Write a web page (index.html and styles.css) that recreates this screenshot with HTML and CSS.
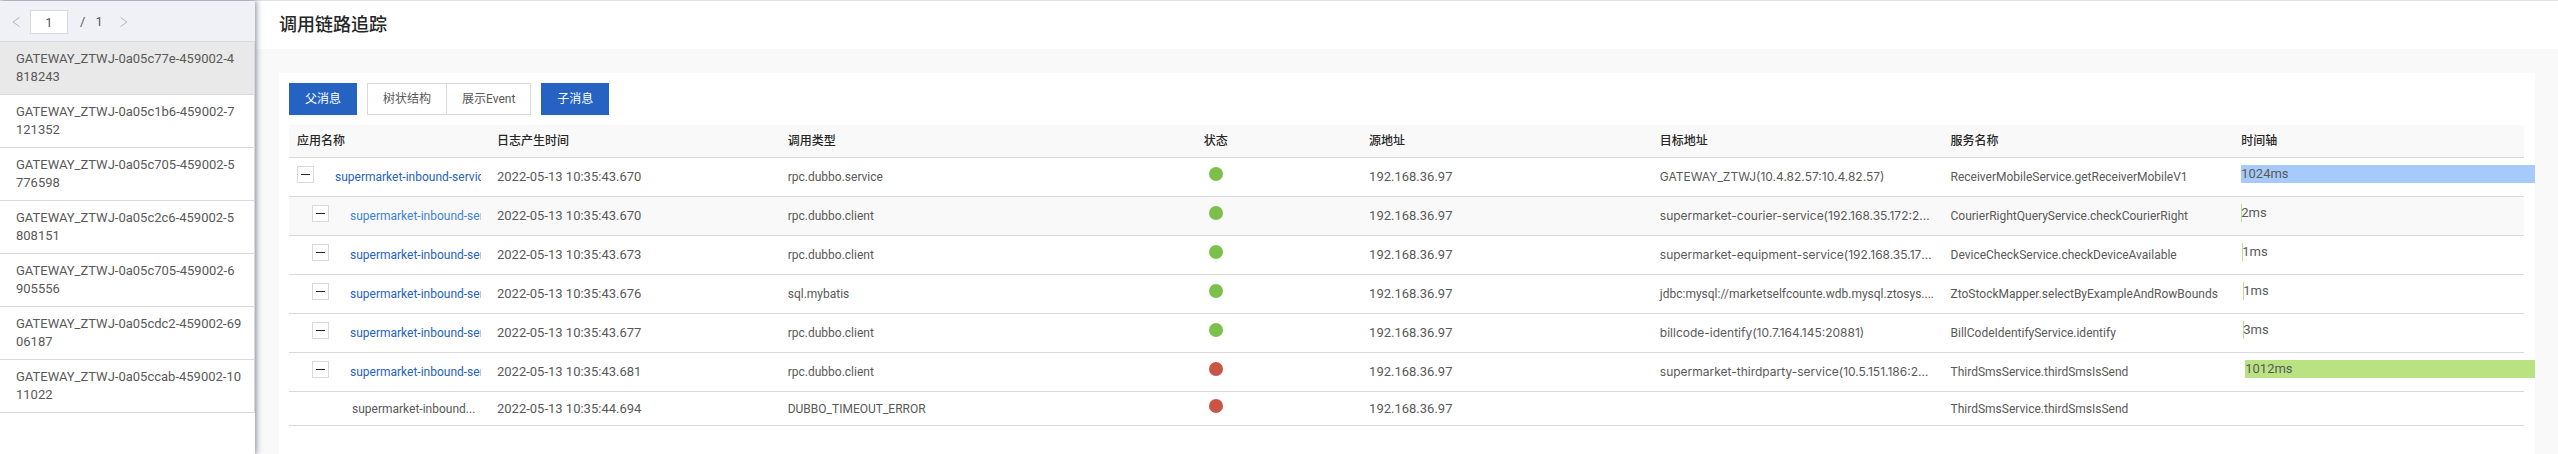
FILE: index.html
```
<!DOCTYPE html>
<html lang="zh-CN">
<head>
<meta charset="utf-8">
<title>调用链路追踪</title>
<link rel="stylesheet" href="styles.css">
</head>
<body>
<div class="layout">
  <aside class="sidebar">
    <nav class="pager" aria-label="分页">
      <button class="pager-arrow" type="button" aria-label="上一页"><svg width="8" height="12" viewBox="0 0 8 12"><path d="M7.5 1.5 1 6l6.500 4.500"/></svg></button>
      <input class="pager-input" type="text" value="1" aria-label="页码">
      <span class="pager-slash">/</span>
      <span class="pager-total">1</span>
      <button class="pager-arrow" type="button" aria-label="下一页"><svg width="8" height="12" viewBox="0 0 8 12"><path d="M.5 1.500 7 6 .5 10.500"/></svg></button>
    </nav>
    <ul class="trace-list">
      <li class="trace-item is-active">GATEWAY_ZTWJ-0a05c77e-459002-4<br>818243</li>
      <li class="trace-item">GATEWAY_ZTWJ-0a05c1b6-459002-7<br>121352</li>
      <li class="trace-item">GATEWAY_ZTWJ-0a05c705-459002-5<br>776598</li>
      <li class="trace-item">GATEWAY_ZTWJ-0a05c2c6-459002-5<br>808151</li>
      <li class="trace-item">GATEWAY_ZTWJ-0a05c705-459002-6<br>905556</li>
      <li class="trace-item">GATEWAY_ZTWJ-0a05cdc2-459002-69<br>06187</li>
      <li class="trace-item">GATEWAY_ZTWJ-0a05ccab-459002-10<br>11022</li>
    </ul>
  </aside>
  <main class="main">
    <header class="page-head"><h1 class="page-title">调用链路追踪</h1></header>
    <section class="card">
      <div class="toolbar">
        <button class="btn btn-primary" type="button">父消息</button>
        <div class="btn-group">
          <button class="btn" type="button">树状结构</button>
          <button class="btn" type="button">展示Event</button>
        </div>
        <button class="btn btn-primary" type="button">子消息</button>
      </div>
      <table class="trace-table">
        <thead>
          <tr><th class="col-app">应用名称</th><th>日志产生时间</th><th>调用类型</th><th class="col-status">状态</th><th>源地址</th><th>目标地址</th><th>服务名称</th><th>时间轴</th></tr>
        </thead>
        <tbody>
          <tr>
            <td><div class="app"><button class="toggle" type="button" aria-label="收起"></button><a class="app-link" href="#">supermarket-inbound-service</a></div></td>
            <td class="col-num">2022-05-13 10:35:43.670</td><td>rpc.dubbo.service</td>
            <td class="col-status"><span class="dot"></span></td>
            <td class="col-num">192.168.36.97</td><td class="col-target">GATEWAY_ZTWJ(10.4.82.57:10.4.82.57)</td><td>ReceiverMobileService.getReceiverMobileV1</td>
            <td class="col-num col-time"><div class="bar bar-root" style="width:110%">1024ms</div></td>
          </tr>
          <tr class="is-hover">
            <td><div class="app app-child"><button class="toggle" type="button" aria-label="收起"></button><a class="app-link" href="#">supermarket-inbound-service</a></div></td>
            <td class="col-num">2022-05-13 10:35:43.670</td><td>rpc.dubbo.client</td>
            <td class="col-status"><span class="dot"></span></td>
            <td class="col-num">192.168.36.97</td><td class="col-target">supermarket-courier-service(192.168.35.172:20880)</td><td>CourierRightQueryService.checkCourierRight</td>
            <td class="col-num col-time"><div class="bar" style="width:1px">2ms</div></td>
          </tr>
          <tr>
            <td><div class="app app-child"><button class="toggle" type="button" aria-label="收起"></button><a class="app-link" href="#">supermarket-inbound-service</a></div></td>
            <td class="col-num">2022-05-13 10:35:43.673</td><td>rpc.dubbo.client</td>
            <td class="col-status"><span class="dot"></span></td>
            <td class="col-num">192.168.36.97</td><td class="col-target">supermarket-equipment-service(192.168.35.172:20880)</td><td>DeviceCheckService.checkDeviceAvailable</td>
            <td class="col-num col-time"><div class="bar" style="width:1px;margin-left:1px">1ms</div></td>
          </tr>
          <tr>
            <td><div class="app app-child"><button class="toggle" type="button" aria-label="收起"></button><a class="app-link" href="#">supermarket-inbound-service</a></div></td>
            <td class="col-num">2022-05-13 10:35:43.676</td><td>sql.mybatis</td>
            <td class="col-status"><span class="dot"></span></td>
            <td class="col-num">192.168.36.97</td><td>jdbc:mysql://marketselfcounte.wdb.mysql.ztosys....</td><td>ZtoStockMapper.selectByExampleAndRowBounds</td>
            <td class="col-num col-time"><div class="bar" style="width:1px;margin-left:2px">1ms</div></td>
          </tr>
          <tr>
            <td><div class="app app-child"><button class="toggle" type="button" aria-label="收起"></button><a class="app-link" href="#">supermarket-inbound-service</a></div></td>
            <td class="col-num">2022-05-13 10:35:43.677</td><td>rpc.dubbo.client</td>
            <td class="col-status"><span class="dot"></span></td>
            <td class="col-num">192.168.36.97</td><td class="col-target">billcode-identify(10.7.164.145:20881)</td><td>BillCodeIdentifyService.identify</td>
            <td class="col-num col-time"><div class="bar" style="width:1px;margin-left:2px">3ms</div></td>
          </tr>
          <tr>
            <td><div class="app app-child"><button class="toggle" type="button" aria-label="收起"></button><a class="app-link" href="#">supermarket-inbound-service</a></div></td>
            <td class="col-num">2022-05-13 10:35:43.681</td><td>rpc.dubbo.client</td>
            <td class="col-status"><span class="dot dot-error"></span></td>
            <td class="col-num">192.168.36.97</td><td class="col-target">supermarket-thirdparty-service(10.5.151.186:20880)</td><td>ThirdSmsService.thirdSmsIsSend</td>
            <td class="col-num col-time"><div class="bar" style="width:108%;margin-left:4px">1012ms</div></td>
          </tr>
          <tr class="row-event">
            <td><div class="event-name">supermarket-inbound...</div></td>
            <td class="col-num">2022-05-13 10:35:44.694</td><td>DUBBO_TIMEOUT_ERROR</td>
            <td class="col-status"><span class="dot dot-error"></span></td>
            <td class="col-num">192.168.36.97</td><td></td><td>ThirdSmsService.thirdSmsIsSend</td><td></td>
          </tr>
        </tbody>
      </table>
    </section>
  </main>
</div>
</body>
</html>
```
FILE: styles.css
```
* { box-sizing: border-box; }

body {
  margin: 0;
  background: #f9f9f9;
  color: #595959;
  font: 12px/18px Roboto, "Noto Sans CJK SC", sans-serif;
}

button, input { font: inherit; color: inherit; }

.layout {
  display: flex;
  min-height: 100vh;
  border-top: 1px solid #e1e2e8;
}

/* Sidebar */
.sidebar {
  position: relative;
  flex: none;
  width: 255px;
  background: #fff;
  font-size: 13px;
  box-shadow: 1px 0 6px rgba(20, 30, 60, .55);
}

.pager {
  display: flex;
  align-items: center;
  height: 40px;
  padding: 2px 12px 0;
  background: #f0f1f7;
}

.pager-arrow {
  display: flex;
  padding: 0;
  border: 0;
  background: none;
}

.pager-arrow svg { fill: none; stroke: #b5b6bb; }

.pager-input {
  width: 38px;
  height: 24px;
  margin: 0 12px 0 10px;
  padding: 0;
  border: 1px solid #d9d9d9;
  background: #fff;
  text-align: center;
}

.pager-total { margin: 0 17px 0 10px; }

.trace-list {
  margin: 0;
  padding: 0;
  list-style: none;
  border-top: 1px solid #d9d9d9;
  border-right: 1px solid #d9d9d9;
}

.trace-item {
  padding: 8px 8px 8px 16px;
  border-bottom: 1px solid #d9d9d9;
  white-space: nowrap;
}

.trace-item.is-active { background: #e9e9e9; }

/* Main area */
.main {
  display: flex;
  flex: 1;
  flex-direction: column;
  min-width: 0;
}

.page-head {
  padding: 12px 24px;
  background: #fff;
}

.page-title {
  margin: 0;
  color: #262626;
  font-size: 18px;
  font-weight: 500;
  line-height: 24px;
}

.card {
  flex: 1;
  margin: 24px 23px 0 24px;
  padding: 10px 11px 24px 10px;
  background: #fff;
  overflow: hidden;
}

.toolbar {
  display: flex;
  gap: 10px;
  margin-bottom: 10px;
}

.btn {
  height: 32px;
  padding: 0 15px;
  border: 1px solid #d9d9d9;
  background: #fff;
}

.btn-primary {
  border-color: #2662c1;
  background: #2662c1;
  color: #fff;
  box-shadow: 0 2px 0 rgba(0, 0, 0, .03);
}

.btn-group { display: flex; }
.btn-group .btn + .btn { margin-left: -1px; }

/* Trace table */
.trace-table {
  width: 100%;
  table-layout: fixed;
  border-spacing: 0;
}

.trace-table th,
.trace-table td {
  padding: 0 8px;
  border-bottom: 1px solid #d9d9d9;
  overflow: hidden;
  text-align: left;
  text-overflow: ellipsis;
  white-space: nowrap;
}

.trace-table th {
  height: 33px;
  background: #f9f9f9;
  color: #262626;
  font-weight: 500;
}

.trace-table td { height: 39px; }
.trace-table .row-event td { height: 34px; }
.trace-table .is-hover td { background: #f9f9f9; }
.trace-table .col-app { width: 200px; }
.trace-table .col-status { text-align: center; }
.trace-table .col-num { font-size: 13px; }
.trace-table .col-target { font-family: Inter, sans-serif; }

.trace-table td.col-status,
.trace-table td.col-time { padding-bottom: 6px; }
.trace-table td.col-time { overflow: visible; }

.app {
  display: flex;
  align-items: center;
  gap: 21px;
  overflow: hidden;
}

.app-child { padding-left: 15px; }
.app-link { color: #2662c1; text-decoration: none; }
.is-hover .app-link { color: #3f82d6; }

.toggle {
  display: flex;
  flex: none;
  align-items: center;
  justify-content: center;
  width: 17px;
  height: 17px;
  margin-bottom: 5px;
  padding: 0;
  border: 1px solid #d9d9d9;
  background: #fff;
}

.toggle::before {
  content: "";
  width: 9px;
  height: 1px;
  background: #262626;
}

.event-name { padding-left: 55px; }

.dot {
  display: block;
  width: 14px;
  height: 14px;
  margin: 0 auto;
  border-radius: 50%;
  background: #7cc04c;
}

.dot-error { background: #c75646; }

.bar {
  height: 18px;
  background: #b9e383;
}

.bar-root { background: #a6cbfb; }
```
